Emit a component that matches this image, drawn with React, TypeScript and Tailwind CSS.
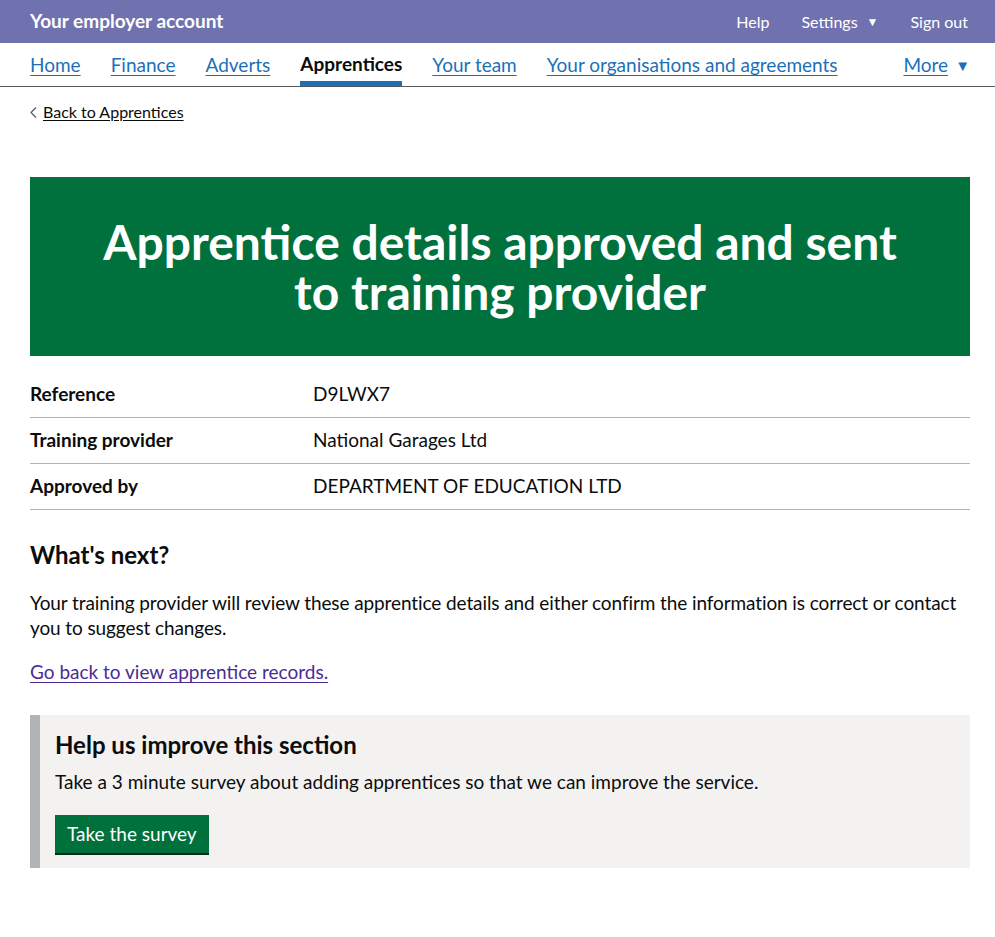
import React from "react";

const navItems = ["Home", "Finance", "Adverts", "Apprentices", "Your team", "Your organisations and agreements"];

const rows = [
  { key: "Reference", value: "D9LWX7" },
  { key: "Training provider", value: "National Garages Ltd" },
  { key: "Approved by", value: "DEPARTMENT OF EDUCATION LTD" },
];

export default function App() {
  return (
    <div className="min-h-[937px] bg-white text-[#0b0c0c] font-['Lato',_'Liberation_Sans',_sans-serif]">
      {/* header */}
      <header className="bg-[#7072af] h-[43px] pl-[30px] pr-[27px] flex items-center justify-between text-white">
        <span className="text-[19px] font-bold">Your employer account</span>
        <div className="flex items-center gap-[32px] text-[16px]">
          <span>Help</span>
          <span className="flex items-center gap-[9px]">
            Settings <span className="text-[12px]">▼</span>
          </span>
          <span>Sign out</span>
        </div>
      </header>

      {/* nav */}
      <nav className="h-[44px] pl-[30px] pr-[25px] border-b border-[#505a5f] flex items-stretch text-[19px]">
        <ul className="flex items-stretch gap-[30px] pt-[2px]">
          {navItems.map((item) =>
            item === "Apprentices" ? (
              <li key={item} className="flex items-center font-bold border-b-[5px] border-[#1d70b8] pt-[3px]">
                {item}
              </li>
            ) : (
              <li key={item} className="flex items-center">
                <a href="#" className="text-[#1d70b8] underline underline-offset-[3px] decoration-1">
                  {item}
                </a>
              </li>
            ),
          )}
        </ul>
        <div className="ml-auto flex items-center gap-[7px] pt-[2px] text-[#1d70b8]">
          <a href="#" className="underline underline-offset-[3px] decoration-1">More</a>
          <span className="text-[15px]">▼</span>
        </div>
      </nav>

      <main className="pl-[30px] pr-[25px]">
        <div className="pt-[13px] text-[16px] flex items-center gap-[6px]">
          <svg width="7" height="11" viewBox="0 0 7 11" className="mt-[1px]">
            <path d="M6 0.5 L1 5.5 L6 10.5" fill="none" stroke="#505a5f" strokeWidth="1.2" />
          </svg>
          <a href="#" className="underline underline-offset-[2px] decoration-1 text-[#0b0c0c]">Back to Apprentices</a>
        </div>

        <div className="mt-[53px] bg-[#00703c] h-[179px] flex items-center justify-center px-[40px]">
          <h1 className="text-white text-[48px] leading-[50px] font-bold text-center">
            Apprentice details approved and sent
            <br />
            to training provider
          </h1>
        </div>

        <dl className="mt-[16px] text-[19px]">
          {rows.map((r) => (
            <div key={r.key} className="flex border-b border-[#b1b4b6] h-[46px] items-center">
              <dt className="w-[283px] font-bold">{r.key}</dt>
              <dd>{r.value}</dd>
            </div>
          ))}
        </dl>

        <h2 className="mt-[30px] text-[24px] font-bold leading-[30px]">What's next?</h2>
        <p className="mt-[20px] text-[19px] leading-[25px] tracking-[-0.1px]">
          Your training provider will review these apprentice details and either confirm the information is correct or contact you to suggest changes.
        </p>
        <p className="mt-[19px] text-[19px] leading-[25px]">
          <a href="#" className="text-[#4c2c92] underline underline-offset-[3px] decoration-1">Go back to view apprentice records.</a>
        </p>

        <div className="mt-[31px] bg-[#f3f2f1] border-l-[10px] border-[#b1b4b6] pl-[15px] pr-[20px] pt-[15px] pb-[13px]">
          <h3 className="text-[24px] font-bold leading-[30px]">Help us improve this section</h3>
          <p className="mt-[9px] text-[19px] leading-[25px]">
            Take a 3 minute survey about adding apprentices so that we can improve the service.
          </p>
          <button className="mt-[21px] mb-[2px] bg-[#00703c] text-white text-[19px] px-[12px] h-[38px] shadow-[0_2px_0_#002d18] block">
            Take the survey
          </button>
        </div>
      </main>
    </div>
  );
}
